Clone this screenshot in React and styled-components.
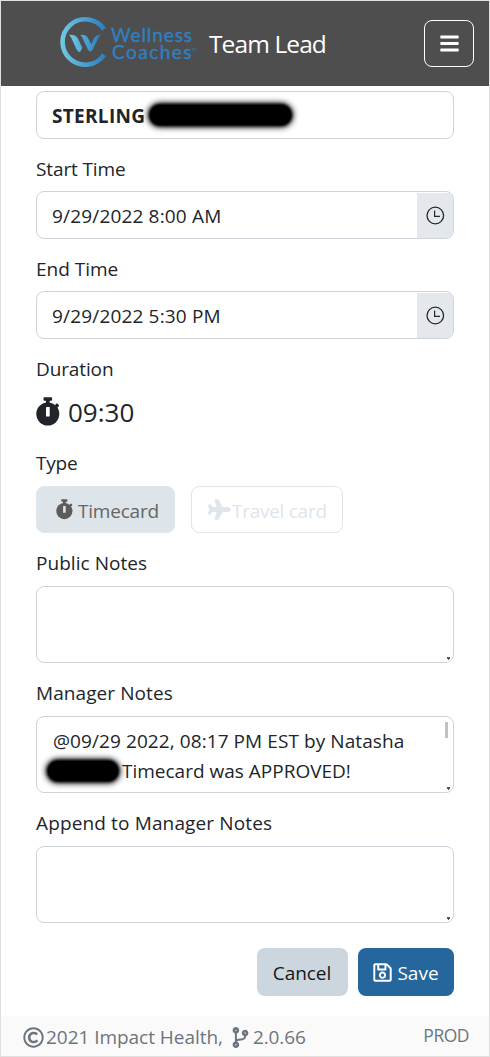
import React from 'react';
import styled, { createGlobalStyle } from 'styled-components';
import { FaBars, FaPlane, FaRegSave, FaRegCopyright, FaCodeBranch } from 'react-icons/fa';

const GlobalStyle = createGlobalStyle`
  * { box-sizing: border-box; }
  body {
    margin: 0;
    background: #fff;
    color: #212529;
    font: 400 19px/30px "Open Sans", "Noto Sans", sans-serif;
  }
`;

const Page = styled.div`
  display: flex;
  flex-direction: column;
  width: 490px;
  height: 1057px;
  border: 1px solid #dfe1e1;
  overflow: hidden;
`;

const Header = styled.header`
  display: flex;
  align-items: center;
  height: 85px;
  flex: none;
  padding: 0 15px 0 57px;
  background: #4e4e4e;
`;

const LogoSvg = styled.svg`
  display: block;
  flex: none;
  margin-top: -3px;
`;

const Title = styled.h1`
  flex: 1;
  margin: 1px 0 0 11px;
  color: #fff;
  font-size: 24.5px;
  font-weight: 400;
  line-height: 36px;
  letter-spacing: -0.9px;
`;

const MenuButton = styled.button`
  display: flex;
  align-items: center;
  justify-content: center;
  width: 50px;
  height: 47px;
  margin: 0;
  padding: 0;
  border: 1px solid #fff;
  border-radius: 8px;
  background: transparent;
  color: #fff;
  font-size: 21px;
`;

const Form = styled.main`
  display: flex;
  flex-direction: column;
  flex: 1;
  padding: 5px 35px 0;
`;

const Text = styled.span`
  white-space: nowrap;
  letter-spacing: ${(p) => p.$ls || 0}px;
`;

const Label = styled.label`
  height: 30px;
  margin: 15px 0 ${(p) => p.$gap ?? 8}px;
  white-space: nowrap;
  letter-spacing: ${(p) => p.$ls || 0}px;
`;

const Field = styled.div`
  display: flex;
  align-items: center;
  height: 48px;
  flex: none;
  padding-left: 15px;
  border: 1px solid #ced4da;
  border-radius: 8px;
  overflow: hidden;
  ${Text} { margin-top: 2px; }
`;

const Name = styled.strong`
  margin-top: 2px;
  font-weight: 700;
  font-size: 19px;
  letter-spacing: 0.3px;
`;

const Redaction = styled.span`
  display: inline-block;
  flex: none;
  width: ${(p) => p.$w}px;
  height: 20px;
  margin: ${(p) => p.$m};
  border-radius: 10px;
  background: #000;
  box-shadow: 0 0 6px 2px #000, 0 0 3px 1px #000;
`;

const ClockAddon = styled.span`
  display: flex;
  align-items: center;
  justify-content: center;
  align-self: stretch;
  width: 36px;
  margin: 1px 0 0 auto;
  background: #e4e7eb;
`;

const Duration = styled.div`
  display: flex;
  align-items: center;
  gap: 8px;
  height: 38px;
  margin: 4px 0 2px;
  font-size: 26px;
  svg { margin-top: -1px; }
`;

const TypeRow = styled.div`
  display: flex;
  gap: 16px;
`;

const TypeButton = styled.button`
  display: flex;
  align-items: center;
  width: ${(p) => p.$w}px;
  height: 47px;
  padding: 2px 0 0 ${(p) => p.$pad}px;
  border: 1px solid #dee5eb;
  border-radius: 8px;
  background: ${(p) => (p.$active ? '#dde4ea' : '#fff')};
  color: ${(p) => (p.$active ? '#666' : '#dee5eb')};
  font: inherit;
  gap: ${(p) => p.$gap}px;
  svg { color: ${(p) => (p.$active ? '#5c5c5c' : '#dee5eb')}; margin-top: -2px; flex: none; }
`;

const NoteBox = styled.div`
  position: relative;
  height: 77px;
  flex: none;
  padding: 9px 16px;
  border: 1px solid #ced4da;
  border-radius: 8px;
`;

const NoteLine = styled.div`
  display: flex;
  align-items: center;
  height: 30px;
`;

const Grip = styled.i`
  position: absolute;
  right: 3px;
  bottom: 3px;
  width: 3px;
  height: 2px;
  background: #555;
  &::after {
    content: '';
    position: absolute;
    left: 1px;
    top: 2px;
    width: 1px;
    height: 1px;
    background: #555;
  }
`;

const ScrollThumb = styled.i`
  position: absolute;
  right: 5px;
  top: 5px;
  width: 3px;
  height: 16px;
  background: #c1c1c1;
`;

const Actions = styled.div`
  display: flex;
  justify-content: flex-end;
  gap: 10px;
  margin-top: 25px;
`;

const ActionButton = styled.button`
  display: flex;
  align-items: center;
  justify-content: center;
  gap: 4px;
  width: ${(p) => p.$w}px;
  height: 48px;
  padding: 2px 1px 0 0;
  border: 0;
  border-radius: 8px;
  background: ${(p) => (p.$primary ? '#25669d' : '#ccd6df')};
  color: ${(p) => (p.$primary ? '#fff' : '#141619')};
  font: inherit;
  font-weight: ${(p) => (p.$primary ? 500 : 400)};
  svg { margin-top: -2px; }
`;

const Footer = styled.footer`
  display: flex;
  align-items: center;
  height: 40px;
  flex: none;
  padding: 2px 20px 0 22px;
  background: #fafafa;
  color: #6c757d;
  svg { flex: none; }
`;

const Copyright = styled.span`
  display: flex;
  align-items: center;
  gap: 2px;
`;

const Version = styled.span`
  display: flex;
  align-items: center;
  gap: 2px;
  margin-left: 7px;
`;

const Environment = styled.span`
  margin: -5px 0 0 auto;
  font-size: 17.5px;
  letter-spacing: -0.5px;
`;

function Logo() {
  return (
    <LogoSvg width="140" height="56" viewBox="58 14 140 56" aria-label="Wellness Coaches">
      <defs>
        <linearGradient id="ring" gradientUnits="userSpaceOnUse" x1="60" y1="42" x2="106" y2="42">
          <stop offset="0" stopColor="#74cbe4" />
          <stop offset="0.5" stopColor="#4ba3d3" />
          <stop offset="1" stopColor="#2b7cbd" />
        </linearGradient>
        <linearGradient id="wing" gradientUnits="userSpaceOnUse" x1="207" y1="130" x2="303" y2="130">
          <stop offset="0" stopColor="#74cbe4" />
          <stop offset="0.5" stopColor="#4ba3d3" />
          <stop offset="1" stopColor="#2b7cbd" />
        </linearGradient>
      </defs>
      <path d="M104.1 29.3A22.7 22.7 0 1 0 104.1 54.7" fill="none" stroke="url(#ring)" strokeWidth="4.6" />
      <g transform="scale(.33333)" fill="url(#wing)">
        <path d="M207 104Q227 103 233 114L247 143L240 157Q234 156 230 149L217 120Q213 110 207 104Z" />
        <path d="M241 104Q259 103 264 114L274 133L282 115Q287 104 303 104Q297 109 293 118L278 149Q271 160 264 149L250 119Q246 109 241 104Z" />
      </g>
      <g fill="#2f80c2" stroke="#2f80c2" strokeWidth="0.35" fontFamily="Lato, sans-serif" fontSize="19">
        <text x="111" y="42" textLength="81" lengthAdjust="spacing">Wellness</text>
        <text x="112" y="59.2" textLength="79.5" lengthAdjust="spacing">Coaches</text>
        <text x="191.5" y="50.5" fontSize="3" strokeWidth="0">TM</text>
      </g>
    </LogoSvg>
  );
}

function Stopwatch({ width, height, slot }) {
  return (
    <svg width={width} height={height} viewBox="0 0 24 29" fill="currentColor">
      <rect x="7.5" y="0.3" width="8.6" height="3.5" rx="0.8" />
      <rect x="9.9" y="2" width="3.8" height="5" />
      <path d="M18 9.6L20.4 6.6L21.4 6.4L23 8.2L22.8 9.2L19.8 12Z" />
      <circle cx="11.8" cy="17" r="11.5" />
      <rect x="10" y="10" width="3.7" height="9.6" rx="0.5" fill={slot} />
    </svg>
  );
}

function Clock() {
  return (
    <svg width="20" height="20" viewBox="0 0 20 20" fill="none" stroke="#24292e">
      <circle cx="10.3" cy="9.5" r="8.3" strokeWidth="1.3" />
      <path d="M9.6 4.5V10.3H15" strokeWidth="1.2" />
    </svg>
  );
}

function TimeField({ value }) {
  return (
    <Field>
      <Text $ls={0.17}>{value}</Text>
      <ClockAddon><Clock /></ClockAddon>
    </Field>
  );
}

export default function App() {
  return (
    <>
      <GlobalStyle />
      <Page>
        <Header>
          <Logo />
          <Title>Team Lead</Title>
          <MenuButton aria-label="Menu"><FaBars /></MenuButton>
        </Header>
        <Form>
          <Field>
            <Name>STERLING</Name>
            <Redaction $w={141} $m="0 0 0 5px" />
          </Field>
          <Label $gap={7} $ls={-0.12}>Start Time</Label>
          <TimeField value="9/29/2022 8:00 AM" />
          <Label $gap={7}>End Time</Label>
          <TimeField value="9/29/2022 5:30 PM" />
          <Label $gap={5} $ls={-0.12}>Duration</Label>
          <Duration>
            <Stopwatch width={24} height={29} slot="#fff" />
            <Text>09:30</Text>
          </Duration>
          <Label $ls={-0.2}>Type</Label>
          <TypeRow>
            <TypeButton $active $w={139} $pad={19} $gap={5} disabled>
              <Stopwatch width={17} height={20.5} slot="#dde4ea" />
              <Text $ls={-0.2}>Timecard</Text>
            </TypeButton>
            <TypeButton $w={152} $pad={16} $gap={1} disabled>
              <FaPlane size={23} />
              <Text $ls={-0.27}>Travel card</Text>
            </TypeButton>
          </TypeRow>
          <Label $ls={0.05}>Public Notes</Label>
          <NoteBox><Grip /></NoteBox>
          <Label $ls={0.08}>Manager Notes</Label>
          <NoteBox>
            <NoteLine><Text $ls={0.08}>@09/29 2022, 08:17 PM EST by Natasha</Text></NoteLine>
            <NoteLine>
              <Redaction $w={70} $m="0 4px 0 -5px" />
              <Text>Timecard was APPROVED!</Text>
            </NoteLine>
            <ScrollThumb />
            <Grip />
          </NoteBox>
          <Label $ls={0.14}>Append to Manager Notes</Label>
          <NoteBox><Grip /></NoteBox>
          <Actions>
            <ActionButton $w={91}><Text $ls={-0.05}>Cancel</Text></ActionButton>
            <ActionButton $w={96} $primary>
              <FaRegSave size={21} />
              <Text>Save</Text>
            </ActionButton>
          </Actions>
        </Form>
        <Footer>
          <Copyright><FaRegCopyright size={21} /><Text $ls={-0.04}>2021 Impact Health,</Text></Copyright>
          <Version><FaCodeBranch size={21} /><Text $ls={-0.1}>2.0.66</Text></Version>
          <Environment>PROD</Environment>
        </Footer>
      </Page>
    </>
  );
}
